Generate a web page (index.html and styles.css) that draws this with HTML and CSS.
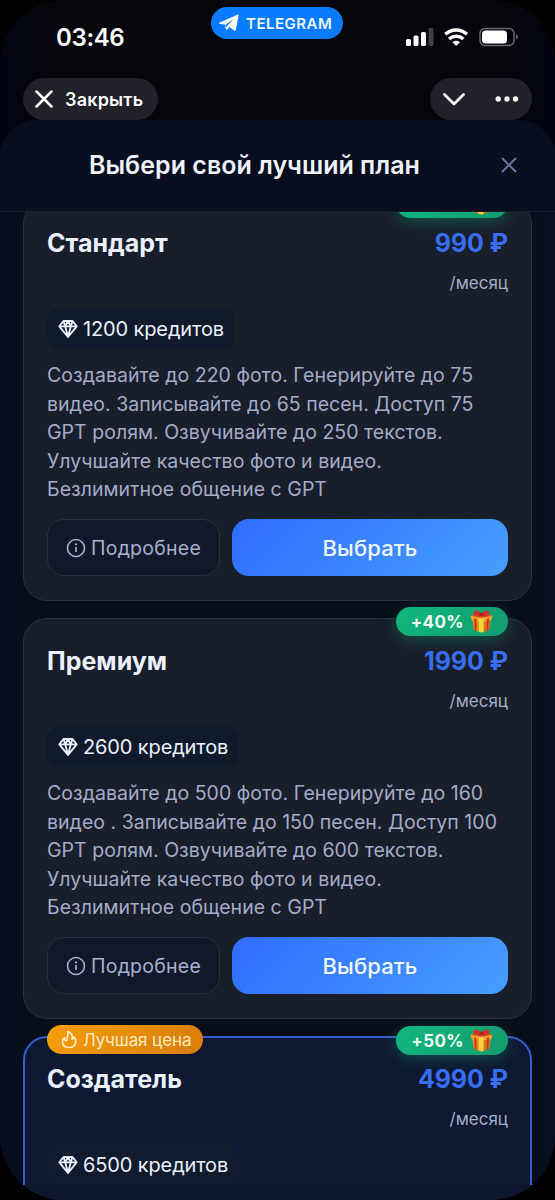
FILE: index.html
```html
<!DOCTYPE html>
<html lang="ru">
<head>
<meta charset="utf-8">
<title>Выбери свой лучший план</title>
<link rel="stylesheet" href="styles.css">
</head>
<body>
<svg class="defs" width="0" height="0">
  <symbol id="gem" viewBox="0 0 20 20"><path d="M5.500 2h9l4.200 5.300L10 18 1.300 7.300zM1.300 7.300h17.400M5.500 2l1.700 5.300L10 18l2.800-10.700L14.500 2M7.200 7.300 10 2l2.800 5.300" fill="none" stroke="currentColor" stroke-width="1.850" stroke-linejoin="round"/></symbol>
  <symbol id="info" viewBox="0 0 20 20"><circle cx="10" cy="10" r="8.500" fill="none" stroke="currentColor" stroke-width="1.600"/><path d="M10 9v5" stroke="currentColor" stroke-width="1.700"/><circle cx="10" cy="6.400" r="1.050" fill="currentColor"/></symbol>
  <symbol id="gift" viewBox="0 0 22 22">
    <path d="M2 7l9 2v12.500L3.500 19z" fill="#e8931d"/><path d="M11 9l9-2-1.500 12-7.500 2.500z" fill="#d9781a"/>
    <path d="M.5 5.500l10.500-2 10.500 2-1 4-9.500 2-9.500-2z" fill="#f0a42b"/><path d="M.5 5.500l10.500 2 10.500-2-10.500-2z" fill="#cf4a1e"/>
    <path d="M8.500 8h4.500v13l-2 .6-2.500-.8z" fill="#ffd33d"/><path d="M4 8l2.300.6v11.400L4.500 19.400zM16 8.600l2.200-.6-.7 11.400-1.500.5z" fill="#d2321e"/>
    <path d="M11 5C8-.5 3.500-.5 3.500 3c0 2 4.500 3.500 7.500 2zM11 5c3-5.500 7.500-5.500 7.500-2 0 2-4.500 3.500-7.500 2z" fill="#d92d25"/><path d="M9 2.500h4V6H9z" fill="#b81d1d"/>
  </symbol>
</svg>
<main class="phone">
  <div class="status">
    <span class="time">03:46</span>
    <span class="telegram">
      <svg width="20" height="18" viewBox="0 0 20 18"><path d="M.6 8.500 18.400.7c.8-.3 1.400.2 1.200 1.100l-2.700 14c-.2 1-.9 1.300-1.700.7l-4.700-3.500-2.500 2.400c-.7.6-1.200.4-1.300-.5L6.200 10.800.7 9.700c-.8-.3-.9-.9-.1-1.200z" fill="#fff"/><path d="m6.300 11 8.500-6.200-6.600 7-.4 1.500z" fill="#087bff"/></svg>
      TELEGRAM
    </span>
    <svg class="signals" width="114" height="22" viewBox="0 0 114 22">
      <g fill="#fff"><rect x="1" y="12" width="5" height="7" rx="1.500"/><rect x="8.500" y="8.500" width="5" height="10.500" rx="1.500"/><rect x="16" y="5" width="5" height="14" rx="1.500"/></g>
      <rect x="23.500" y="1" width="5" height="18" rx="1.500" fill="#414145"/>
      <g fill="none" stroke="#fff" stroke-width="3.500"><path d="M40.300 7.300c6.200-5.700 15.500-5.700 21.700 0M44 12c4.200-3.600 10.300-3.600 14.400 0"/></g><path d="M47.500 15.200c2.200-1.800 5.200-1.800 7.400 0L51.200 19z" fill="#fff"/>
      <rect x="75" y="1.500" width="34" height="17" rx="5" fill="none" stroke="#68686c" stroke-width="1.500"/><rect x="77" y="3.500" width="25" height="13" rx="3.500" fill="#fff"/><path d="M111 7.500c2.500 1 2.500 4 0 5z" fill="#68686c"/>
    </svg>
  </div>
  <nav class="toolbar">
    <div class="pill close"><svg width="18" height="18" viewBox="0 0 18 18"><path d="m1.500 1.500 15 15m0-15-15 15" stroke="#fff" stroke-width="2.500" stroke-linecap="round"/></svg><span>Закрыть</span></div>
    <div class="pill more"><svg width="22" height="13" viewBox="0 0 22 13"><path d="m1.500 1.500 9.500 9.500 9.500-9.500" fill="none" stroke="#fff" stroke-width="2.700" stroke-linecap="round" stroke-linejoin="round"/></svg><svg width="24" height="6" viewBox="0 0 24 6"><g fill="#fff"><circle cx="3.200" cy="3" r="2.700"/><circle cx="12" cy="3" r="2.700"/><circle cx="20.500" cy="3" r="2.700"/></g></svg></div>
  </nav>
  <section class="sheet">
    <header class="heading"><h1>Выбери свой лучший план</h1><svg width="16" height="16" viewBox="0 0 16 16"><path d="m1.500 1.500 13 13m0-13-13 13" stroke="#7779a5" stroke-width="1.800" stroke-linecap="round"/></svg></header>
    <div class="plans">
      <article class="card">
        <span class="bonus"><svg width="23" height="23"><use href="#gift"/></svg></span>
        <div class="top"><h2>Стандарт</h2><div class="price">990 ₽</div></div>
        <div class="period">/месяц</div>
        <div class="credits"><svg width="20" height="20"><use href="#gem"/></svg><span>1200 кредитов</span></div>
        <p>Создавайте до 220 фото. Генерируйте до 75<br>видео. Записывайте до 65 песен. Доступ 75<br>GPT ролям. Озвучивайте до 250 текстов.<br>Улучшайте качество фото и видео.<br>Безлимитное общение с GPT</p>
        <div class="actions"><div class="details"><svg width="20" height="20"><use href="#info"/></svg><span>Подробнее</span></div><div class="choose">Выбрать</div></div>
      </article>
      <article class="card">
        <span class="bonus"><b>+40%</b><svg width="23" height="23"><use href="#gift"/></svg></span>
        <div class="top"><h2>Премиум</h2><div class="price">1990 ₽</div></div>
        <div class="period">/месяц</div>
        <div class="credits"><svg width="20" height="20"><use href="#gem"/></svg><span>2600 кредитов</span></div>
        <p>Создавайте до 500 фото. Генерируйте до 160<br>видео . Записывайте до 150 песен. Доступ 100<br>GPT ролям. Озвучивайте до 600 текстов.<br>Улучшайте качество фото и видео.<br>Безлимитное общение с GPT</p>
        <div class="actions"><div class="details"><svg width="20" height="20"><use href="#info"/></svg><span>Подробнее</span></div><div class="choose">Выбрать</div></div>
      </article>
      <article class="card best">
        <span class="best-price"><svg width="16" height="19" viewBox="0 0 16 19"><path d="M7 1.500c.8 3-1.200 4.800-.8 7.400.2 1.800-1.500 2.300-2.300 1.100-.5-.7-.4-1.500-.2-2.200C.3 10 .5 17.500 8 17.500c7 0 8.500-7 4.700-10.500-.2 1.200-.8 1.800-1.600 2.100C12 5.500 10 2.800 7 1.500z" fill="none" stroke="#ffebc3" stroke-width="1.700" stroke-linejoin="round"/></svg><span>Лучшая цена</span></span>
        <span class="bonus"><b>+50%</b><svg width="23" height="23"><use href="#gift"/></svg></span>
        <div class="top"><h2>Создатель</h2><div class="price">4990 ₽</div></div>
        <div class="period">/месяц</div>
        <div class="credits"><svg width="20" height="20"><use href="#gem"/></svg><span>6500 кредитов</span></div>
      </article>
    </div>
    <div class="footer"></div>
  </section>
</main>
</body>
</html>
```

FILE: styles.css
```css
* { box-sizing: border-box; }
body { margin: 0; background: #000; font-family: Inter, "Noto Sans", sans-serif; color: #eaf0ff; }
svg { display: block; flex: none; }
.defs { position: absolute; }
.phone { width: 555px; height: 1200px; overflow: hidden; border-radius: 64px; background: linear-gradient(90deg, #020511, #05060b 12%, #05060b 88%, #020511); display: flex; flex-direction: column; white-space: nowrap; }
.status { height: 78px; position: relative; flex: none; }
.time { position: absolute; left: 56px; top: 23px; font-size: 24px; line-height: 30px; font-weight: 600; color: #fff; letter-spacing: -.35px; }
.telegram { position: absolute; left: 211px; top: 7px; width: 132px; height: 32px; border-radius: 16px; padding-left: 8px; display: flex; align-items: center; gap: 7px; background: #087bff; color: #eef7ff; font-size: 15px; font-weight: 600; letter-spacing: .5px; }
.signals { position: absolute; left: 405px; top: 27px; }
.toolbar { display: flex; justify-content: space-between; padding: 0 23px; height: 42px; flex: none; }
.pill { height: 42px; border-radius: 21px; background: #202129; display: flex; align-items: center; color: #fff; }
.close { width: 135px; padding-left: 12px; gap: 12px; font-size: 18px; font-weight: 600; letter-spacing: .2px; }
.more { width: 102px; padding: 0 13px; justify-content: space-between; }
.sheet { height: 1080px; flex: none; border-radius: 37px 37px 0 0; background: linear-gradient(90deg, #050e20, #080d1a 5%, #080d1a 95%, #071022); overflow: hidden; display: flex; flex-direction: column; }
.heading { height: 92px; flex: none; padding: 0 38px 2px 89px; display: flex; align-items: center; justify-content: space-between; border-bottom: 1px solid #161d2e; background: #090e1e; }
h1 { margin: 0; font-size: 25px; font-weight: 600; line-height: 32px; letter-spacing: .02px; color: #eef2ff; }
.plans { height: 973px; flex: none; overflow: hidden; padding: 0 23px; }
.card { position: relative; height: 401px; margin-bottom: 17px; padding: 26px 23px 0; border: 1px solid #2b303e; border-radius: 24px; background: #191e2b; }
.card:first-child { margin-top: -12px; }
.top { display: flex; justify-content: space-between; height: 32px; line-height: 32px; }
h2 { margin: 0; font-size: 25px; font-weight: 700; letter-spacing: 0; }
.price { font-size: 25px; font-weight: 700; color: #376ef2; letter-spacing: -.1px; }
.period { text-align: right; font-size: 17px; line-height: 24px; margin-top: 12px; color: #a6acc5; letter-spacing: 0; }
.credits { width: fit-content; height: 40px; margin-top: 14px; padding: 0 11px; border-radius: 10px; background: #111a2b; display: flex; align-items: center; gap: 5px; font-size: 20px; letter-spacing: -.13px; }
p { margin: 12px 0 0; font-size: 19.500px; line-height: 28.500px; color: #a5abc8; letter-spacing: .03px; }
.actions { display: flex; gap: 12px; margin-top: 15px; height: 57px; }
.details { width: 173px; flex: none; border: 1px solid #2a3040; border-radius: 17px; background: #10182a; color: #a8afd0; display: flex; align-items: center; justify-content: center; gap: 5px; padding-top: 1px; font-size: 19.500px; letter-spacing: .24px; }
.choose { flex: 1; border-radius: 17px; background: linear-gradient(135deg, #2f6cff, #479eff); display: flex; align-items: center; justify-content: center; padding-top: 2px; font-size: 22px; font-weight: 500; letter-spacing: .15px; color: #f2f8ff; }
.bonus { position: absolute; right: 23px; top: -12px; width: 112px; height: 29px; border-radius: 15px; padding: 0 15px 0 14px; display: flex; align-items: center; justify-content: flex-end; gap: 6px; background: linear-gradient(120deg, #10b77e, #139c70); box-shadow: 0 4px 15px #10b98150; color: #f2fff8; font-size: 17px; }
.bonus b { font-weight: 700; letter-spacing: .4px; }
.best { background: #0e1832; border-color: #315fcf; border-width: 2px; padding: 25px 22px 0; }
.best .bonus { right: 22px; top: -12px; }
.best .credits { background: #101b2e; }
.best-price { position: absolute; left: 22px; top: -13px; width: 156px; height: 29px; border-radius: 15px; background: linear-gradient(120deg, #f59e0b, #d87c07); display: flex; align-items: center; padding-left: 14px; gap: 6px; color: #ffebc3; font-size: 17px; letter-spacing: -.1px; }
.footer { height: 15px; flex: none; background: #0e162d; }
```
